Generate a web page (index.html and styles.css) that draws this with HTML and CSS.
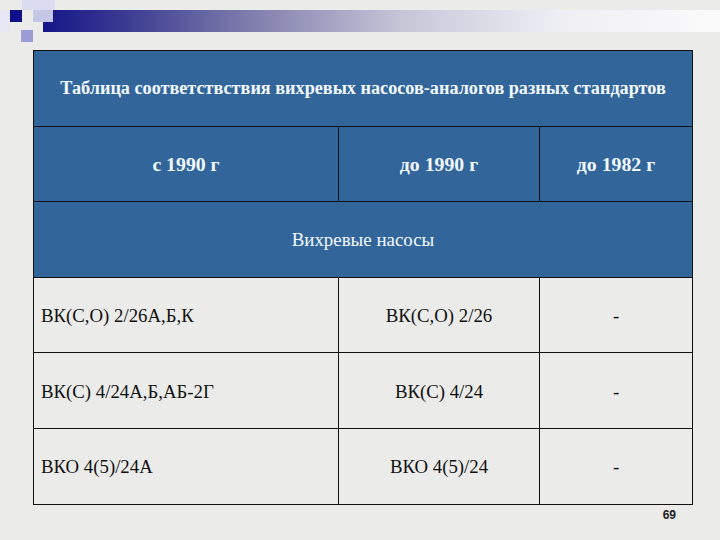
FILE: index.html
```html
<!DOCTYPE html>
<html lang="ru">
<head>
<meta charset="utf-8">
<title>Таблица соответствия</title>
<link rel="stylesheet" href="styles.css">
</head>
<body>
<div class="page">
  <div class="strip"></div>
  <table class="pumps">
    <colgroup>
      <col class="c1"><col class="c2"><col class="c3">
    </colgroup>
    <tr class="head">
      <td colspan="3" class="title">Таблица соответствствия вихревых насосов-аналогов разных стандартов</td>
    </tr>
    <tr class="head">
      <td class="hcell">с 1990 г</td>
      <td class="hcell">до 1990 г</td>
      <td class="hcell">до 1982 г</td>
    </tr>
    <tr class="head">
      <td colspan="3" class="section">Вихревые насосы</td>
    </tr>
    <tr class="data">
      <td class="left">ВК(С,О) 2/26А,Б,К</td>
      <td class="mid">ВК(С,О) 2/26</td>
      <td class="mid">-</td>
    </tr>
    <tr class="data">
      <td class="left">ВК(С) 4/24А,Б,АБ-2Г</td>
      <td class="mid">ВК(С) 4/24</td>
      <td class="mid">-</td>
    </tr>
    <tr class="data">
      <td class="left">ВКО 4(5)/24А</td>
      <td class="mid">ВКО 4(5)/24</td>
      <td class="mid">-</td>
    </tr>
  </table>
  <div class="pagenum">69</div>
</div>
</body>
</html>
```

FILE: styles.css
```css
html, body {
  margin: 0;
  padding: 0;
}
body {
  width: 720px;
  height: 540px;
  overflow: hidden;
  background: #ebebea;
  font-family: "Liberation Serif", "Times New Roman", serif;
}
.page {
  width: 720px;
  height: 540px;
}
.strip {
  height: 50px;
  background:
    linear-gradient(#10108a, #10108a) 10px 10px / 12px 12px no-repeat,
    linear-gradient(#c6c6e6, #c6c6e6) 33px 10px / 20px 12px no-repeat,
    linear-gradient(#9c9cd6, #9c9cd6) 21px 30px / 12px 12px no-repeat,
    linear-gradient(#dcdcf0, #dcdcf0) 22px 0 / 33px 10px no-repeat,
    linear-gradient(#e6e6f4, #e6e6f4) 0 10px / 10px 22px no-repeat,
    linear-gradient(90deg, #16168a 0%, #3a3a92 12%, #7a78aa 29%, #c6c6d8 53%, #eeeef4 76%, #fbfbfb 100%) 43px 10px / 677px 22px no-repeat,
    #ebebea;
}
.pumps {
  margin-left: 33px;
  width: 659px;
  border-collapse: collapse;
  table-layout: fixed;
  border: 1px solid #111;
}
.c1 { width: 305px; }
.c2 { width: 201px; }
.c3 { width: 153px; }
.pumps tr {
  height: 75.6px;
}
.pumps td {
  border: 1px solid #111;
  padding: 0;
  vertical-align: middle;
  line-height: 1.15;
  font-family: "Liberation Serif", "Times New Roman", serif;
}
.head td {
  background: #32669a;
  color: #f2f8ff;
  text-align: center;
}
.title {
  font-weight: bold;
  font-size: 18.2px;
  padding-top: 3px;
}
.hcell {
  font-weight: bold;
  font-size: 19.8px;
  padding-top: 3px;
}
.section {
  font-size: 18.9px;
  padding-top: 5px;
}
.data td {
  color: #111;
  font-size: 18.8px;
  padding-top: 2px;
}
.data .left {
  padding-left: 7px;
  text-align: left;
}
.data .mid {
  text-align: center;
}
.pagenum {
  width: 676px;
  text-align: right;
  font-family: "Liberation Sans", Arial, sans-serif;
  font-weight: bold;
  font-size: 12px;
  color: #222;
  padding-top: 3px;
}
```
